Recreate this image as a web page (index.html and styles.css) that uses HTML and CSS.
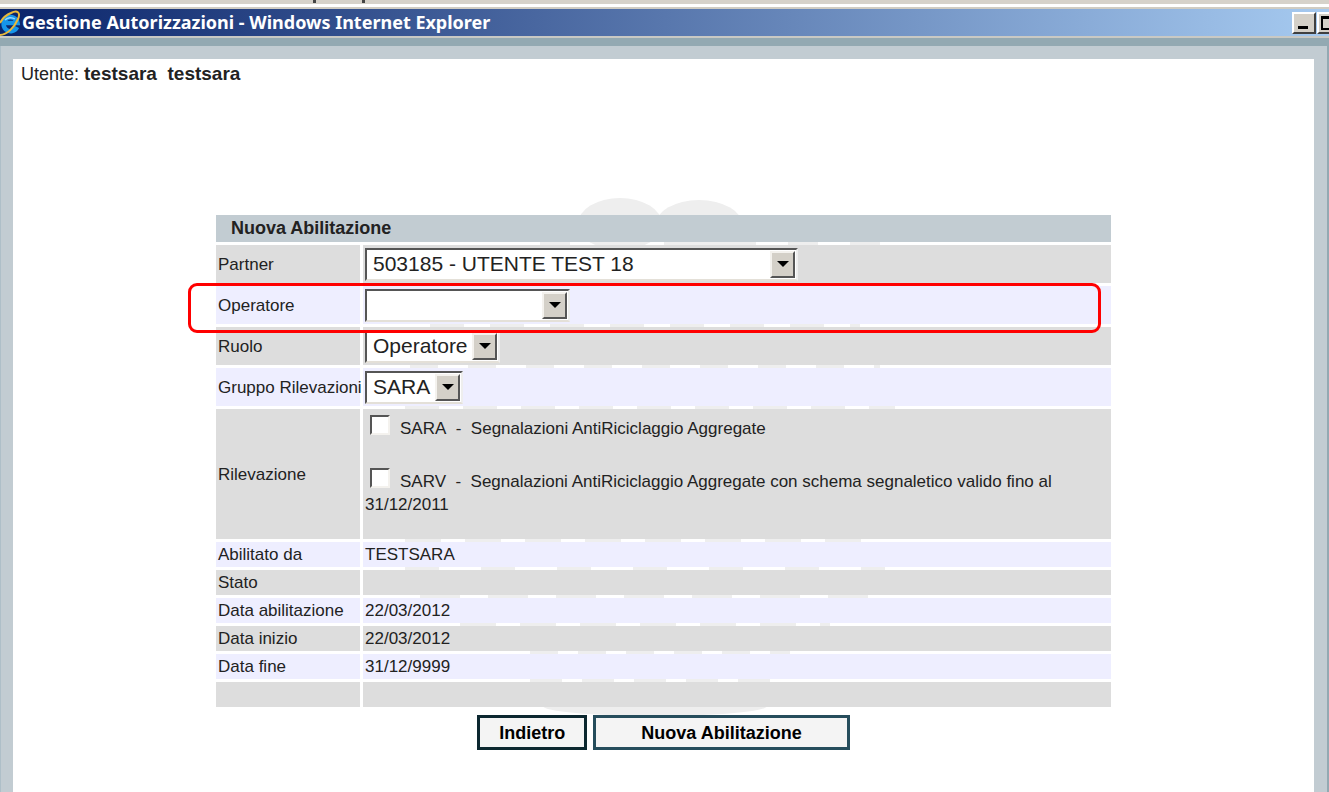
FILE: index.html
```html
<!DOCTYPE html>
<html lang="it">
<head>
<meta charset="utf-8">
<title>Gestione Autorizzazioni</title>
<link rel="stylesheet" href="styles.css">
</head>
<body>
<div class="window">
  <div class="chrome-edge"><i class="descender"></i><i class="descender"></i></div>
  <header class="titlebar">
    <svg class="ie-logo" viewBox="0 0 24 26" aria-hidden="true">
      <path d="M19 17A7 7 0 1 1 19.500 13H7" fill="none" stroke="#1595ea" stroke-width="4.500"/>
      <path d="M7 10A7 6 0 0 1 17 9" fill="none" stroke="#8fd8ff" stroke-width="1.500"/>
      <path d="M1 25C9 25 16 18 20 9C23 2 19 0 13 3C8 5 4 9 2 13" fill="none" stroke="#e8b83a" stroke-width="2"/>
    </svg>
    <h1 class="title">Gestione Autorizzazioni - Windows Internet Explorer</h1>
    <div class="window-buttons">
      <button class="winbtn" type="button" aria-label="Riduci a icona"><svg viewBox="0 0 20 18"><path d="M4 13.500h10" stroke="#000" stroke-width="3"/></svg></button>
      <button class="winbtn" type="button" aria-label="Ingrandisci"><svg viewBox="0 0 20 18"><path d="M3 3h13v12H3z" fill="none" stroke="#000" stroke-width="2"/><path d="M2 3.500h15" stroke="#000" stroke-width="3"/></svg></button>
    </div>
  </header>
  <div class="frame">
    <main class="page">
      <p class="user">Utente: <b>testsara&nbsp; testsara</b></p>
      <form class="form">
        <svg class="watermark" viewBox="0 0 560 530" aria-hidden="true">
          <g fill="#eee">
            <ellipse cx="220" cy="34" rx="42" ry="26"/>
            <ellipse cx="299" cy="36" rx="44" ry="26"/>
            <ellipse cx="255" cy="516" rx="112" ry="10"/>
          </g>
          <g fill="none" stroke="#eee" stroke-width="8">
            <path d="M140 54h350" stroke-dasharray="30 32"/>
            <path d="M30 134h430" stroke-dasharray="34 26"/>
            <path d="M10 175h470" stroke-dasharray="28 30"/>
            <path d="M5 216h490" stroke-dasharray="34 24"/>
            <path d="M5 350h480" stroke-dasharray="36 24"/>
            <path d="M5 378h480" stroke-dasharray="34 42"/>
            <path d="M20 406h460" stroke-dasharray="40 28"/>
            <path d="M60 434h370" stroke-dasharray="36 24"/>
            <path d="M130 462h260" stroke-dasharray="28 20"/>
            <path d="M130 490h260" stroke-dasharray="32 20"/>
          </g>
        </svg>
        <table class="grid">
          <colgroup><col class="names"><col></colgroup>
          <thead><tr><th colspan="2">Nuova Abilitazione</th></tr></thead>
          <tbody>
            <tr class="tall grey"><td><label for="partner">Partner</label></td><td><span class="select partner"><select id="partner"><option>503185 - UTENTE TEST 18</option></select><span class="drop"><svg viewBox="0 0 12 6"><path d="M0 0h12L6 6z"/></svg></span></span></td></tr>
            <tr class="tall lilac"><td class="marked"><span class="highlight"></span><label for="operatore">Operatore</label></td><td><span class="select operatore"><select id="operatore"><option></option></select><span class="drop"><svg viewBox="0 0 12 6"><path d="M0 0h12L6 6z"/></svg></span></span></td></tr>
            <tr class="tall grey"><td><label for="ruolo">Ruolo</label></td><td><span class="select ruolo"><select id="ruolo"><option>Operatore</option></select><span class="drop"><svg viewBox="0 0 12 6"><path d="M0 0h12L6 6z"/></svg></span></span></td></tr>
            <tr class="tall lilac"><td><label for="gruppo">Gruppo Rilevazioni</label></td><td><span class="select gruppo"><select id="gruppo"><option>SARA</option></select><span class="drop"><svg viewBox="0 0 12 6"><path d="M0 0h12L6 6z"/></svg></span></span></td></tr>
            <tr class="surveys grey"><td>Rilevazione</td><td class="options">
              <div class="survey"><input type="checkbox" id="sara"><label for="sara">SARA&nbsp; -&nbsp; Segnalazioni AntiRiciclaggio Aggregate</label></div>
              <div class="survey"><input type="checkbox" id="sarv"><label for="sarv">SARV&nbsp; -&nbsp; Segnalazioni AntiRiciclaggio Aggregate con schema segnaletico valido fino al 31/12/2011</label></div>
            </td></tr>
            <tr class="lilac"><td>Abilitato da</td><td>TESTSARA</td></tr>
            <tr class="grey"><td>Stato</td><td></td></tr>
            <tr class="lilac"><td>Data abilitazione</td><td>22/03/2012</td></tr>
            <tr class="grey"><td>Data inizio</td><td>22/03/2012</td></tr>
            <tr class="lilac"><td>Data fine</td><td>31/12/9999</td></tr>
            <tr class="grey"><td></td><td></td></tr>
          </tbody>
        </table>
        <div class="actions">
          <button class="action focused" type="button">Indietro</button>
          <button class="action wide" type="button">Nuova Abilitazione</button>
        </div>
      </form>
    </main>
  </div>
</div>
</body>
</html>
```
FILE: styles.css
```css
* { box-sizing: border-box; }
body { margin: 0; font-family: "Liberation Sans", Arial, sans-serif; color: #222; }
.window { display: flex; flex-direction: column; min-height: 100vh; overflow: hidden; }
.chrome-edge { display: flex; gap: 46px; height: 9px; padding-left: 313px; background: #d6d2ca; border-bottom: 2px solid #d0ccc2; box-shadow: inset 0 -3px #fff; }
.descender { width: 3px; height: 3px; background: #444; }
.titlebar { display: flex; align-items: center; height: 29px; background: linear-gradient(90deg, #0a246a, #a6caf0); border-bottom: 2px solid #c9c9c4; }
.ie-logo { width: 24px; height: 26px; margin-left: -2px; flex: none; }
.title { flex: 1; margin: 0; color: #fff; font: bold 18px/27px "Noto Sans", sans-serif; white-space: nowrap; }
.window-buttons { display: flex; gap: 1px; margin-right: -12px; }
.winbtn { width: 24px; height: 22px; padding: 0; background: #d4d0c8; border: 2px solid; border-color: #fff #404040 #404040 #fff; }
.winbtn svg { display: block; width: 20px; height: 18px; }
.frame { flex: 1; display: flex; padding: 13px 15px 0 13px; background: #c2ccd2; border-top: 8px solid #93a9b2; box-shadow: inset 1px 0 #aebfc8, inset -2px 0 #93a9b2; }
.page { flex: 1; background: #fff; }
.user { margin: 0; padding: 5px 8px; font-size: 18px; line-height: 20px; }
.user b { font-size: 19px; }
.form { position: relative; max-width: 901px; margin: 123px auto 0; }
.watermark { position: absolute; left: 187px; top: -22px; width: 560px; height: 530px; }
.grid { position: relative; width: 100%; border-spacing: 3px; table-layout: fixed; font-size: 17px; line-height: 23px; }
.names { width: 144px; }
th { height: 27px; padding: 0 15px; background: #c2ccd2; font-size: 18px; text-align: left; }
td { height: 25px; padding: 0 2px; }
td:first-child { white-space: nowrap; }
.grey td { background: #ddd; }
.lilac td { background: #eef; }
.tall td { height: 38px; }
.surveys td { height: 130px; }
.surveys .options { padding-top: 6px; vertical-align: top; }
.marked { position: relative; }
.highlight { position: absolute; left: -28px; top: -3px; width: 913px; height: 50px; border: 3px solid #f00; border-radius: 9px; pointer-events: none; z-index: 2; }
.select { display: flex; height: 33px; padding: 1px 1px 1px 2px; background: #fff; border: 2px solid; border-color: #555 #eee #e4e0d8 #555; }
.select select { flex: 1; min-width: 0; padding: 0 4px; appearance: none; border: 0; background: #fff; color: #222; font: 21px/24px "Liberation Sans", sans-serif; }
.drop { display: grid; place-items: center; width: 25px; background: #d4d0c8; border: 2px solid; border-color: #f4f2ee #555 #555 #f4f2ee; pointer-events: none; }
.drop svg { width: 12px; height: 6px; }
.partner { width: 433px; }
.operatore { width: 205px; }
.ruolo { width: 135px; }
.gruppo { width: 98px; }
.survey { min-height: 53px; }
.survey input { appearance: none; width: 20px; height: 20px; margin: 0 10px 0 5px; background: #fff; border: 2px solid; border-color: #555 #f4f2ee #f4f2ee #555; vertical-align: -1px; }
.actions { position: relative; display: flex; justify-content: center; gap: 6px; margin-top: 5px; }
.action { height: 35px; padding: 0 19px; background: #f4f4f4; border: 3px solid #264d5c; color: #000; font: bold 18px/24px "Liberation Sans", sans-serif; }
.focused { border-color: #0c2830; }
.wide { padding: 0 45px; }
```
